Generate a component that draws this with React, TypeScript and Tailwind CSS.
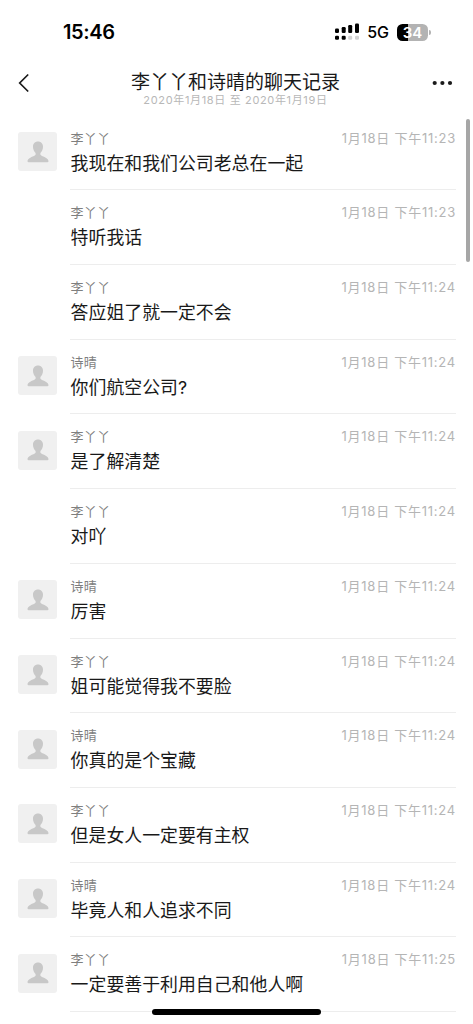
import React from 'react';

const FIRST = '李丫丫';
const SECOND = '诗晴';

const messages = [
  { name: FIRST, text: '我现在和我们公司老总在一起', minute: '11:23', avatar: true },
  { name: FIRST, text: '特听我话', minute: '11:23', avatar: false },
  { name: FIRST, text: '答应姐了就一定不会', minute: '11:24', avatar: false },
  { name: SECOND, text: '你们航空公司?', minute: '11:24', avatar: true },
  { name: FIRST, text: '是了解清楚', minute: '11:24', avatar: true },
  { name: FIRST, text: '对吖', minute: '11:24', avatar: false },
  { name: SECOND, text: '厉害', minute: '11:24', avatar: true },
  { name: FIRST, text: '姐可能觉得我不要脸', minute: '11:24', avatar: true },
  { name: SECOND, text: '你真的是个宝藏', minute: '11:24', avatar: true },
  { name: FIRST, text: '但是女人一定要有主权', minute: '11:24', avatar: true },
  { name: SECOND, text: '毕竟人和人追求不同', minute: '11:24', avatar: true },
  { name: FIRST, text: '一定要善于利用自己和他人啊', minute: '11:25', avatar: true },
];

const SignalIcon = () => (
  <svg width="25" height="18" viewBox="0 0 25 18">
    <g fill="#000">
      <rect x="0" y="5.5" width="4" height="4.5" rx="1.2" />
      <rect x="6.7" y="4" width="4" height="6" rx="1.2" />
      <rect x="13.2" y="2" width="4" height="8" rx="1.2" />
      <rect x="20" y="0.5" width="4" height="9.5" rx="1.2" />
      <rect x="0" y="12.7" width="4" height="4" rx="1.2" />
      <rect x="6.7" y="12.7" width="4" height="4" rx="1.2" />
    </g>
    <g fill="#d2d2d2">
      <rect x="13.2" y="12.7" width="4" height="4" rx="1.2" />
      <rect x="20" y="12.7" width="4" height="4" rx="1.2" />
    </g>
  </svg>
);

const Battery = () => (
  <div className="flex items-center gap-px">
    <div className="flex h-[17px] w-[31px] items-center justify-center rounded-[5.5px] bg-[linear-gradient(to_right,#000_34%,#b3b3b3_34%)] text-[15px] leading-none font-semibold text-white">
      34
    </div>
    <div className="h-[5px] w-[2px] rounded-r-full bg-[#b3b3b3]" />
  </div>
);

const StatusBar = () => (
  <div className="flex h-[64px] shrink-0 items-center justify-between pr-[42px] pl-[63px]">
    <span className="text-[20px] leading-none font-semibold tracking-[-0.35px]">15:46</span>
    <div className="flex items-center">
      <SignalIcon />
      <span className="mr-[8px] ml-[7px] text-[16px] leading-none font-medium">5G</span>
      <Battery />
    </div>
  </div>
);

const Header = () => (
  <header className="flex h-[51px] shrink-0 justify-between pr-[20px] pl-[18px]">
    <div className="w-[21px] pt-[9px]">
      <svg width="12" height="20" viewBox="0 0 12 20" fill="none">
        <path d="M10.2 1.5 1.7 10l8.5 8.5" stroke="#1a1a1a" strokeWidth="1.7" />
      </svg>
    </div>
    <div className="flex flex-col items-center">
      <h1 className="mt-[7px] text-[19px] leading-[24px] text-[#191919]">李丫丫和诗晴的聊天记录</h1>
      <p className="text-[11px] leading-[11px] tracking-[0.65px] text-[#b8b8b8]">
        2020年1月18日 至 2020年1月19日
      </p>
    </div>
    <svg className="mt-[16px]" width="21" height="6" viewBox="0 0 21 6" fill="#1a1a1a">
      <circle cx="2.7" cy="3" r="2.1" />
      <circle cx="10.4" cy="3" r="2.1" />
      <circle cx="18" cy="3" r="2.1" />
    </svg>
  </header>
);

const Avatar = () => (
  <div className="flex size-[39px] items-center justify-center rounded-[3px] bg-[#f0f0f0]">
    <svg width="22" height="22" viewBox="0 0 22 22" fill="#c8c8c8">
      <path d="M11 .5c3 0 5 2.200 5 5.200 0 2.500-1 4.800-2.600 6.200v1.900c.8 1 3.200 1.800 5.300 2.900 1.700.9 2.800 1.900 2.800 3.600 0 .6-.4.900-1.100.9H1.600c-.7 0-1.100-.3-1.100-.9 0-1.700 1.100-2.700 2.800-3.600 2.100-1.100 4.500-1.900 5.300-2.900v-1.900C7 10.500 6 8.200 6 5.700 6 2.700 8 .5 11 .5Z" />
    </svg>
  </div>
);

const MessageRow = ({ message }) => (
  <li className="flex h-[74.7px] shrink-0 pr-[17px] pl-[18px]">
    <div className="w-[52px] shrink-0 pt-[16.5px]">{message.avatar && <Avatar />}</div>
    <div className="flex-1 border-b border-[#ededed] pt-[12px]">
      <div className="flex justify-between pl-[0.6px] leading-[20px]">
        <span className="text-[13px] tracking-[0.2px] text-[#7f7f7f]">{message.name}</span>
        <span className="text-[13px] tracking-[0.75px] text-[#b5b5b5]">
          1月18日 下午{message.minute}
        </span>
      </div>
      <p className="mt-[2px] pl-[0.6px] text-[17.9px] leading-[28px] text-[#191919]">
        {message.text}
      </p>
    </div>
  </li>
);

export default function App() {
  return (
    <div className="relative flex h-[1024px] w-[473px] flex-col overflow-hidden bg-white font-['Inter','Noto_Sans_CJK_SC',sans-serif] text-black">
      <StatusBar />
      <Header />
      <ul className="flex flex-col pt-[0.7px]">
        {messages.map((message, i) => (
          <MessageRow key={'message' + i} message={message} />
        ))}
      </ul>
      {/* scroll thumb */}
      <div className="absolute top-[119px] right-[3px] h-[143px] w-[4px] rounded-full bg-[#a6a6a6]" />
      {/* home indicator */}
      <div className="absolute top-[1009px] left-[152px] h-[6px] w-[169px] rounded-full bg-black" />
    </div>
  );
}
